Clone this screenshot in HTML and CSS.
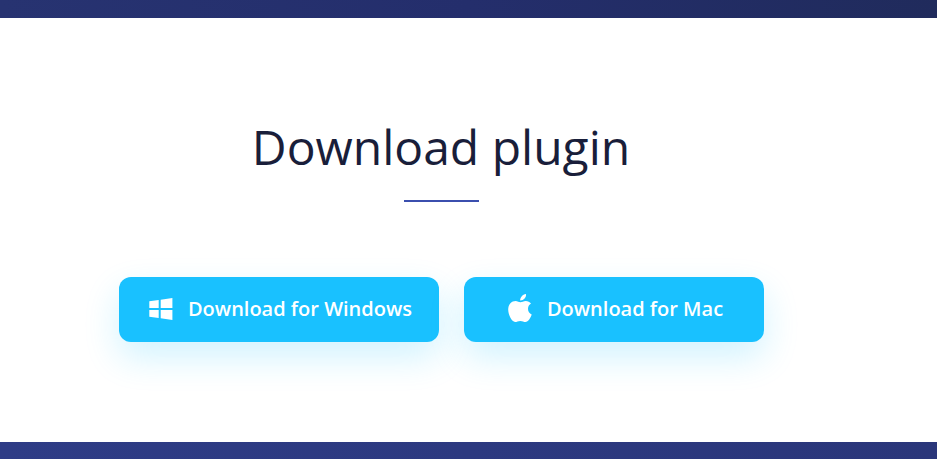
FILE: index.html
```html
<!DOCTYPE html>
<html lang="en">
<head>
<meta charset="utf-8">
<title>Download plugin</title>
<link rel="stylesheet" href="styles.css">
</head>
<body>
<div class="band band-top"></div>
<main class="download">
  <div class="container">
    <h1 class="title">Download plugin</h1>
    <div class="buttons">
      <a class="btn btn-windows" href="#windows">
        <svg class="icon" viewBox="0 0 24 24" aria-hidden="true"><path d="M.3 4.300 9.700 3V11H.3zM11.700 2.700 23.400 1V11H11.700zM.3 13H9.700V21L.3 19.800zM11.700 13H23.400V23L11.700 21.300z"/></svg>
        <span>Download for Windows</span>
      </a>
      <a class="btn btn-mac" href="#mac">
        <svg class="icon icon-apple" viewBox="0 0 24 30" aria-hidden="true"><path d="M20 14.800c0-2.400 1.300-4.100 3-5.200-1.300-1.800-3.100-2.700-5.200-2.700-2.300 0-4 1.300-5.400 1.300S9.500 6.900 7.600 6.900C3.700 6.900.2 10 .2 15.600c0 5.500 3.700 12.400 6.900 12.400 1.800 0 2.900-1.100 5.200-1.100s3.400 1.100 5.200 1.100c2.700 0 5.200-4.200 6.200-7.500-2.300-1-3.700-3-3.700-5.700zM16.600 4.600C17.700 3.300 18.300 1.700 18 0c-1.700.1-3.400 1.100-4.400 2.400-1 1.200-1.600 2.700-1.400 4.200 1.700.1 3.300-.7 4.400-2z"/></svg>
        <span>Download for Mac</span>
      </a>
    </div>
  </div>
</main>
<div class="band band-bottom"></div>
</body>
</html>
```
FILE: styles.css
```css
* { box-sizing: border-box; }
body {
  margin: 0;
  min-height: 100vh;
  display: flex;
  flex-direction: column;
  background: #fff;
  color: #191e3a;
  font-family: "Open Sans", sans-serif;
}
.band-top { height: 18px; background: linear-gradient(to right, #273371, #242e6c 50%, #202b5c); }
.band-bottom { flex: 1; min-height: 17px; background: linear-gradient(to right, #2e3c86, #2a367a); }
.download { padding: 94px 55px 100px 0; }
.container {
  display: flex;
  flex-direction: column;
  align-items: center;
}
.title {
  margin: 0;
  font-size: 48px;
  line-height: 70px;
  font-weight: 400;
  text-align: center;
}
.title::after {
  content: "";
  display: block;
  width: 75px;
  height: 2px;
  margin: 18px auto 0;
  background: #3b4fae;
}
.buttons {
  display: flex;
  flex-wrap: wrap;
  justify-content: center;
  gap: 25px;
  margin-top: 75px;
}
.btn {
  display: flex;
  align-items: center;
  justify-content: center;
  gap: 15px;
  height: 65px;
  padding: 0 0 2px 4px;
  border-radius: 12px;
  background: #19c1ff;
  box-shadow: 0 15px 35px rgba(25, 193, 255, 0.2);
  color: #fff;
  font-size: 20px;
  line-height: 30px;
  font-weight: 600;
  text-decoration: none;
}
.btn-windows { width: 320px; }
.btn-mac { width: 300px; }
.icon { width: 24px; height: 24px; fill: currentColor; }
.icon-apple { height: 30px; }
```
